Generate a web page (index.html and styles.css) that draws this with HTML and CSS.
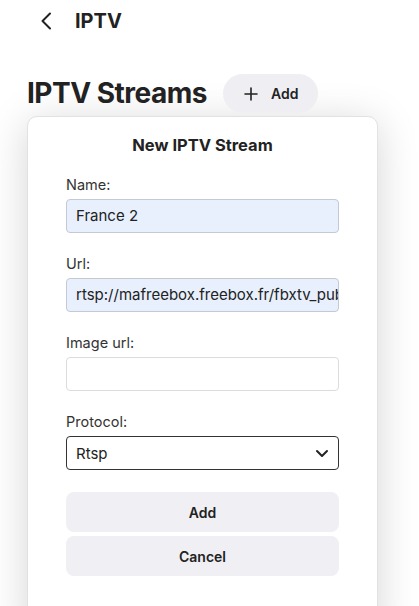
FILE: index.html
```html
<!DOCTYPE html>
<html lang="en">
<head>
<meta charset="utf-8">
<title>IPTV</title>
<link rel="stylesheet" href="styles.css">
</head>
<body>
<header class="topbar">
  <svg class="back" width="12" height="18" viewBox="0 0 12 18"><path d="M10 1.5 L2.5 9 L10 16.5" fill="none" stroke="#222" stroke-width="2" stroke-linecap="round" stroke-linejoin="round"/></svg>
  <span class="topbar-title">IPTV</span>
</header>
<section class="heading-row">
  <h1 class="heading">IPTV Streams</h1>
  <button class="pill-btn" type="button">
    <svg width="14" height="14" viewBox="0 0 14 14"><path d="M7 1 V13 M1 7 H13" stroke="#222" stroke-width="1.6" stroke-linecap="round"/></svg>
    <span>Add</span>
  </button>
</section>
<div class="card">
  <h2 class="card-title">New IPTV Stream</h2>
  <form class="form">
    <div class="field">
      <label class="label">Name:</label>
      <div class="input input-filled">France 2</div>
    </div>
    <div class="field">
      <label class="label">Url:</label>
      <div class="input input-filled">rtsp://mafreebox.freebox.fr/fbxtv_pub/stream</div>
    </div>
    <div class="field">
      <label class="label">Image url:</label>
      <div class="input"></div>
    </div>
    <div class="field">
      <label class="label">Protocol:</label>
      <div class="select">
        <span>Rtsp</span>
        <svg width="14" height="9" viewBox="0 0 14 9"><path d="M2 2 L7 7 L12 2" fill="none" stroke="#222" stroke-width="2" stroke-linecap="round" stroke-linejoin="round"/></svg>
      </div>
    </div>
    <div class="actions">
      <button class="block-btn" type="button">Add</button>
      <button class="block-btn" type="button">Cancel</button>
    </div>
  </form>
</div>
</body>
</html>
```
FILE: styles.css
```css
* { box-sizing: border-box; }
html, body { margin: 0; padding: 0; background: #fff; }
body {
  font-family: Inter, "Noto Sans", sans-serif;
  color: #222;
  width: 419px;
  height: 606px;
  overflow: hidden;
}
.topbar {
  height: 42px;
  display: flex;
  align-items: center;
  padding-left: 40px;
  gap: 23px;
}
.back { display: block; }
.topbar-title {
  font-size: 20px;
  font-weight: 700;
  line-height: 24px;
}
.heading-row {
  margin-top: 32px;
  display: flex;
  align-items: center;
  padding-left: 27px;
  gap: 16px;
}
.heading {
  margin: 0;
  font-size: 28px;
  font-weight: 700;
  line-height: 39px;
  letter-spacing: -0.5px;
}
.pill-btn {
  height: 39px;
  border: none;
  border-radius: 20px;
  background: #efeff3;
  display: flex;
  align-items: center;
  gap: 13px;
  padding: 0 20px 0 21px;
  font-family: inherit;
  font-size: 14px;
  font-weight: 600;
  color: #222;
}
.card {
  margin: 3px 0 0 27px;
  width: 351px;
  height: 520px;
  background: #fff;
  border: 1px solid #e2e2e2;
  border-radius: 10px;
  box-shadow: 0 6px 40px rgba(0,0,0,0.17);
  padding: 16px 38px;
}
.card-title {
  margin: 0;
  text-align: center;
  font-size: 16.5px;
  font-weight: 700;
  line-height: 24px;
}
.form {
  margin-top: 18px;
  display: flex;
  flex-direction: column;
  gap: 21px;
}
.field {
  display: flex;
  flex-direction: column;
  gap: 4px;
}
.label {
  font-size: 14.5px;
  line-height: 20px;
  color: #333;
}
.input {
  height: 34px;
  border: 1px solid #dcdcdc;
  border-radius: 4px;
  padding: 0 9px;
  font-size: 15px;
  line-height: 32px;
  white-space: nowrap;
  overflow: hidden;
  color: #222;
}
.input-filled {
  background: #e8f0fe;
  border-color: #c3cad6;
}
.select {
  height: 34px;
  border: 1px solid #333;
  border-radius: 4px;
  padding: 0 9px;
  display: flex;
  align-items: center;
  justify-content: space-between;
  font-size: 15px;
}
.actions {
  margin-top: 1px;
  display: flex;
  flex-direction: column;
  gap: 4px;
}
.block-btn {
  height: 40px;
  border: none;
  border-radius: 8px;
  background: #f0f0f4;
  font-family: inherit;
  font-size: 14px;
  font-weight: 600;
  color: #222;
}
```
